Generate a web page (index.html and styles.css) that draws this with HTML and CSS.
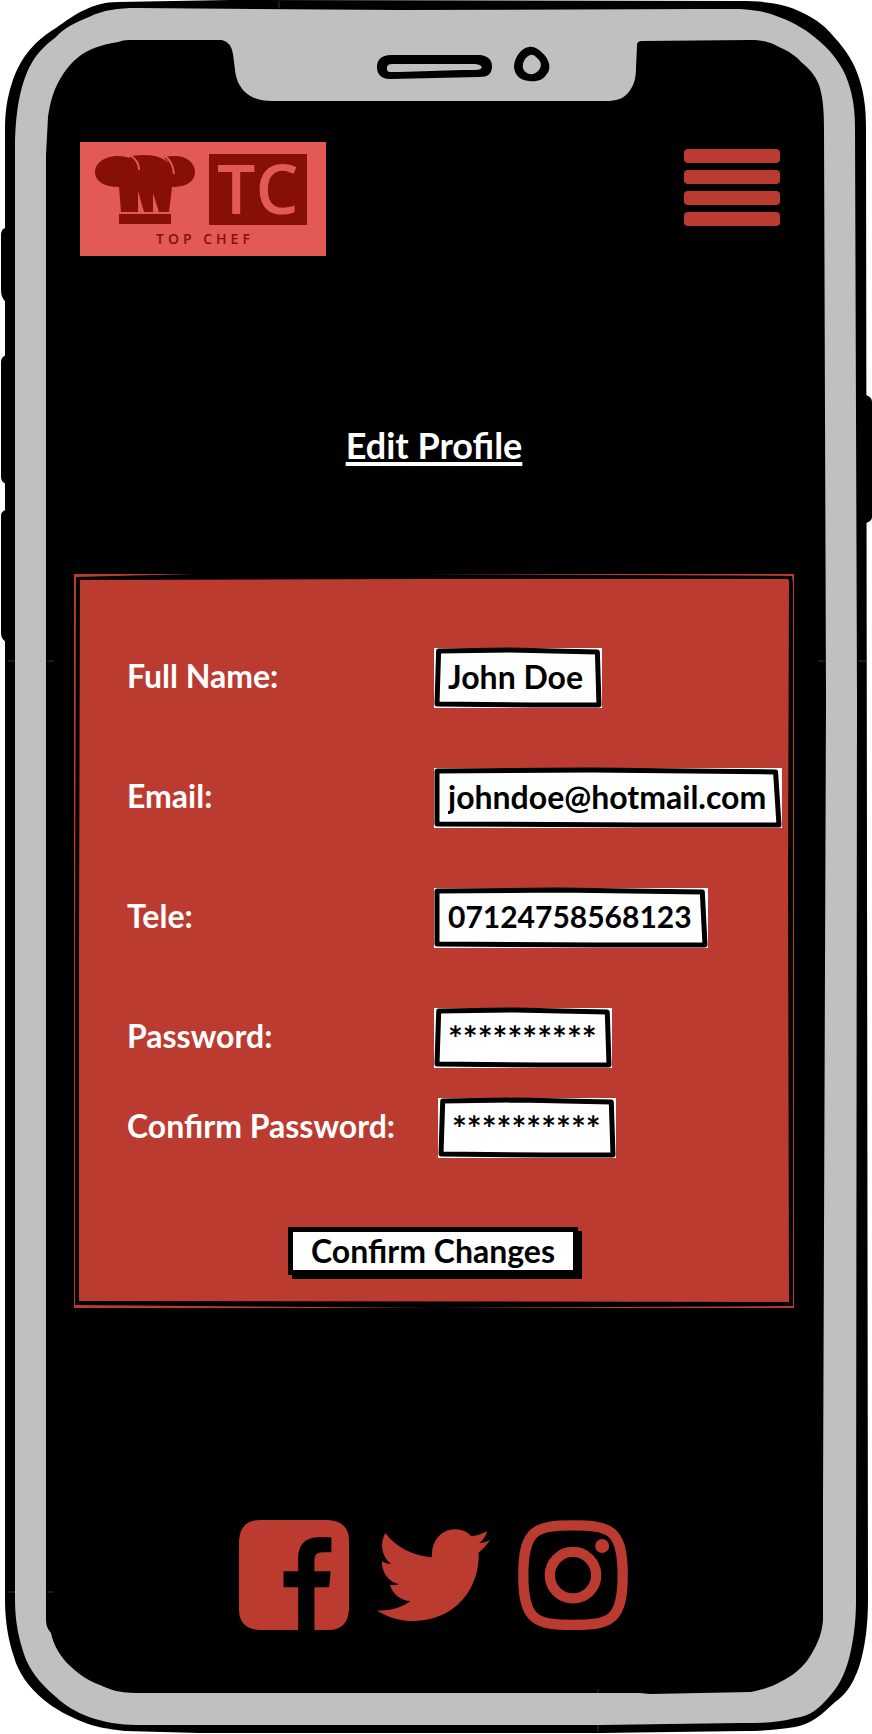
FILE: index.html
```html
<!DOCTYPE html>
<html lang="en">
<head>
<meta charset="utf-8">
<meta name="viewport" content="width=device-width, initial-scale=1">
<title>Top Chef - Edit Profile</title>
<link rel="stylesheet" href="styles.css">
</head>
<body>
<div class="phone">
  <svg class="phone-shell" viewBox="0 0 872 1734" preserveAspectRatio="none" aria-hidden="true">
    <path d="M6 228Q1 228 1 236V290Q1 298 6 302ZM6 355Q1 357 1 362V477Q1 482 6 484ZM6 510Q1 511 1 516V633Q1 639 6 642ZM866 395Q872 397 872 402V517Q872 521 866 523Z"/>
    <path d="M5 130C5 112 7 98 12 83C20 57 36 40 56 28C74 15 92 2 118 2L230 0L740 1C770 1 787 5 801 12C818 20 827 28 834 37C846 50 854 62 859 78C864 93 866 108 866 128L868 1600C868 1625 865 1648 859 1667C852 1686 846 1694 834 1703C822 1714 812 1724 795 1727C776 1730 760 1731 745 1731L600 1733H200L125 1731C108 1729 95 1727 83 1722C68 1716 55 1709 44 1700C29 1688 18 1672 14 1657C8 1640 5 1620 5 1600Z"/>
    <path fill="#c0c0c0" d="M15 140C16 110 20 88 28 70C35 55 44 46 56 37C64 28 76 22 89 17C103 10 118 8 137 8L400 10L700 9H740C755 10 768 12 779 17C795 23 808 31 818 40C829 49 837 59 843 70C851 86 855 104 855 128L857 700L856 1600C856 1620 854 1636 851 1650C847 1670 840 1685 829 1697C819 1708 811 1716 795 1718C778 1723 760 1723 740 1723L600 1725H137C120 1725 103 1722 89 1717C76 1712 64 1705 56 1697C40 1684 30 1670 25 1657C19 1640 15 1622 15 1600Z"/>
    <path d="M46 155L48 117C50 104 52 96 56 87C62 74 70 63 81 55C94 46 108 44 118 42Q123 40 129 40H222Q231 42 233 54L235 70C236 79 239 86 245 92C253 99 261 101 272 101H606C616 101 623 99 628 93C634 86 636 78 636 68L637 45Q637 41 642 41L751 40C762 40 770 42 779 47C790 52 796 56 801 62C811 70 817 78 820 88C823 100 824 110 824 130L826 700L823 1500V1620C822 1633 818 1643 812 1653C806 1664 797 1673 784 1680C774 1686 762 1690 751 1692L650 1694L640 1693H136C121 1693 110 1690 100 1685C86 1680 76 1672 67 1663C58 1653 53 1643 51 1633Q46 1628 46 1620Z"/>
    <path fill-rule="evenodd" d="M391 55H480C489 56 492 61 492 66C492 74 488 77 479 77L390 79C380 79 377 73 377 67C377 60 381 55 391 55ZM392 64C387 64 387 67 387 69C387 73 390 72 400 72L462 70L475 70C484 70 484 65 475 64Z"/>
    <path fill-rule="evenodd" d="M529 47C535 46 541 51 546 57C550 63 551 70 546 75C543 80 537 82 529 81C520 80 515 76 514 67C514 59 520 48 529 47ZM530 55C525 57 522 63 523 68C525 75 534 76 538 71C542 67 542 62 537 58Q534 54 530 55Z"/>
    <path fill="none" stroke="#333" d="M8 661H15M47 661H54M818 661H825M858 661H866M8 1592H15M47 1592H54M279 1V8M598 1689V1693M598 1725V1732"/>
  </svg>

  <div class="screen">
    <header class="top-bar">
      <a class="logo" href="#" aria-label="Top Chef home">
        <svg viewBox="0 0 246 114" aria-hidden="true">
          <path fill="#861004" d="M38 14C46 14 53 17 57 20C60 24 60 27 58 27C55 20 53 18 49 16Q50 13 65 13C80 13 88 19 93 26Q95 30 93 31C90 22 87 18 84 16C88 14 91 14 95 14C107 14 115 21 115 30C115 39 107 45 92 45L89 70H79L73 51V70H64L58 49V70H41L39 45C24 45 15 39 15 30C15 21 25 14 38 14Z"/>
          <path fill="none" stroke="#e35953" stroke-width="2" d="M51 14Q59 19 59 28M85 14Q93 20 94 32"/>
          <path fill="#861004" d="M39 72H91V82H39ZM129 12H227V83H129Z"/>
          <text class="logo-mark" x="137" y="72">TC</text>
          <text class="logo-name" x="76" y="102">TOP CHEF</text>
        </svg>
      </a>
      <button class="menu-button" type="button" aria-label="Menu">
        <span class="menu-bar"></span>
        <span class="menu-bar"></span>
        <span class="menu-bar"></span>
        <span class="menu-bar"></span>
      </button>
    </header>

    <main>
      <h1 class="title">Edit Profile</h1>
      <form class="card">
        <svg class="card-frame" viewBox="0 0 720 734" preserveAspectRatio="none" aria-hidden="true">
          <path fill-rule="evenodd" d="M2 3L120 0H340L718 2L719 10V400L719 732L360 734L1 731L1 400ZM6 6L5 370V727L715 728L714 300L715 7L714 5L350 5Z"/>
        </svg>
        <div class="field">
          <label for="name">Full Name:</label>
          <div class="box box-name">
            <svg class="box-frame" viewBox="0 0 100 60" preserveAspectRatio="none" aria-hidden="true"><path d="M1 3L45 2L99 4L100 57L60 57L0 56Z"/></svg>
            <input id="name" type="text" value="John Doe">
          </div>
        </div>
        <div class="field">
          <label for="email">Email:</label>
          <div class="box box-email">
            <svg class="box-frame" viewBox="0 0 100 60" preserveAspectRatio="none" aria-hidden="true"><path d="M0 3L45 2L99 4L100 57L60 57L0 56Z"/></svg>
            <input id="email" type="email" value="johndoe@hotmail.com">
          </div>
        </div>
        <div class="field">
          <label for="tele">Tele:</label>
          <div class="box box-tele">
            <svg class="box-frame" viewBox="0 0 100 60" preserveAspectRatio="none" aria-hidden="true"><path d="M0 3L45 2L99 4L100 57L60 57L0 56Z"/></svg>
            <input id="tele" type="tel" value="07124758568123">
          </div>
        </div>
        <div class="field">
          <label for="password">Password:</label>
          <div class="box box-password">
            <svg class="box-frame" viewBox="0 0 100 60" preserveAspectRatio="none" aria-hidden="true"><path d="M1 3L45 2L99 4L100 57L60 57L0 56Z"/></svg>
            <input id="password" type="text" value="**********">
          </div>
        </div>
        <div class="field field-confirm">
          <label for="confirm">Confirm Password:</label>
          <div class="box box-password">
            <svg class="box-frame" viewBox="0 0 100 60" preserveAspectRatio="none" aria-hidden="true"><path d="M1 3L45 2L99 4L100 57L60 57L0 56Z"/></svg>
            <input id="confirm" type="text" value="**********">
          </div>
        </div>
        <button class="submit" type="submit">Confirm Changes</button>
      </form>
    </main>

    <footer class="social">
      <a href="#" aria-label="Facebook">
        <svg width="110" height="110" viewBox="56 59 331 331" aria-hidden="true"><path fill-rule="evenodd" d="M118 59H325Q387 63 387 121V328Q383 390 325 390H283V261H327L332 213H283V178Q283 156 307 156H334V111H292Q234 115 234 173V213H190V261H234V390H118Q56 386 56 328V121Q60 59 118 59Z"/></svg>
      </a>
      <a href="#" aria-label="Twitter">
        <svg width="113" height="110" viewBox="470 59 340 331" aria-hidden="true"><path d="M495 98C525 140 580 168 636 171C632 125 662 87 704 87C724 87 742 95 754 108C772 106 786 101 801 93C798 108 790 119 777 129C790 128 800 125 810 120C801 134 789 146 776 157C780 270 700 363 580 363C540 363 503 352 470 331C508 334 544 323 571 303C542 302 517 283 509 254C518 256 527 255 536 252C505 245 483 217 485 183C493 188 502 191 512 191C484 170 477 130 495 98Z"/></svg>
      </a>
      <a href="#" aria-label="Instagram">
        <svg width="110" height="110" viewBox="895 59 332 331" aria-hidden="true">
          <path fill="none" stroke="#bc3b31" stroke-width="31" d="M1061 75C1171 75 1211 85 1211 225C1211 365 1171 375 1061 375C951 375 911 365 911 225C911 85 951 75 1061 75Z"/>
          <circle cx="1061" cy="225" r="70" fill="none" stroke="#bc3b31" stroke-width="31"/>
          <circle cx="1149" cy="137" r="21"/>
        </svg>
      </a>
    </footer>
  </div>
</div>
</body>
</html>
```

FILE: styles.css
```css
* {
  box-sizing: border-box;
}

body {
  margin: 0;
  background: #fff;
  font-family: Lato, "Open Sans", sans-serif;
  font-size: 32px;
  font-weight: 700;
  line-height: 40px;
}

.phone {
  position: relative;
  min-height: 100vh;
}

.phone-shell,
.card-frame {
  position: absolute;
  inset: 0;
  width: 100%;
  height: 100%;
  pointer-events: none;
}

.box-frame {
  position: absolute;
  inset: 0 3px;
  width: calc(100% - 6px);
  height: 100%;
  overflow: visible;
  pointer-events: none;
}

.box-frame path {
  fill: none;
  stroke: #000;
  stroke-width: 5px;
  stroke-linejoin: round;
  vector-effect: non-scaling-stroke;
}

.screen {
  position: relative;
  padding: 142px 78px 104px 74px;
}

.top-bar {
  display: flex;
  justify-content: space-between;
  align-items: flex-start;
  padding: 0 14px 0 6px;
}

.logo {
  display: block;
  width: 246px;
  height: 114px;
  background: #e35953;
}

.logo svg {
  display: block;
}

.logo-mark {
  font-family: "Open Sans", sans-serif;
  font-size: 68px;
  font-weight: 600;
  fill: #e35953;
}

.logo-name {
  font-family: "Open Sans", sans-serif;
  font-size: 14px;
  font-weight: 600;
  letter-spacing: 4px;
  fill: #861004;
}

.menu-button {
  display: flex;
  flex-direction: column;
  gap: 7px;
  width: 96px;
  margin-top: 7px;
  padding: 0;
  border: 0;
  background: none;
}

.menu-bar {
  width: 100%;
  height: 14px;
  border-radius: 4px;
  background: #bc3b31;
}

.title {
  margin: 169px 0 109px;
  color: #fff;
  font-size: 36px;
  line-height: 40px;
  text-align: center;
  text-decoration: underline;
  text-decoration-thickness: 4px;
  text-underline-offset: 3px;
  text-decoration-skip-ink: none;
}

.card {
  position: relative;
  display: flex;
  flex-direction: column;
  gap: 60px;
  padding: 74px 12px 33px 53px;
  background: #bc3b31;
}

.field {
  display: flex;
  align-items: center;
  color: #fff;
}

.field label {
  flex: 0 0 307px;
  padding-bottom: 4px;
}

.field-confirm {
  margin-top: -30px;
}

.field-confirm label {
  flex-basis: 311px;
}

.box {
  position: relative;
  height: 60px;
  background: #fff;
}

.box input {
  display: block;
  width: 100%;
  height: 60px;
  padding: 0 14px 4px;
  border: 0;
  background: none;
  color: #000;
  font: inherit;
}

.box-name {
  width: 168px;
}

.box-email {
  width: 348px;
}

.box-tele {
  width: 274px;
}

.box-tele input {
  font-size: 30px;
}

.box-password {
  width: 178px;
}

.box-password input {
  padding-right: 8px;
  padding-bottom: 2px;
  font-size: 35px;
}

.submit {
  align-self: center;
  margin: 9px 43px 0 0;
  padding: 0 18px;
  border: 5px solid #000;
  background: #fff;
  box-shadow: 4px 4px 0 #000;
  color: #000;
  font: inherit;
  line-height: 38px;
}

.social {
  display: flex;
  justify-content: center;
  gap: 28px;
  margin-top: 212px;
  padding-right: 2px;
}

.social svg {
  display: block;
  fill: #bc3b31;
}
```
